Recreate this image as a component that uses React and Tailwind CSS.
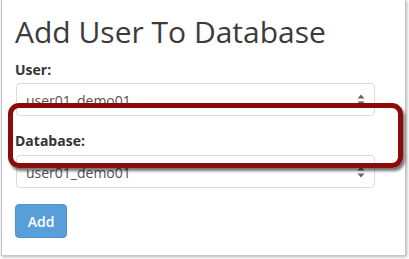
import React from "react";

function Arrows() {
  return (
    <svg width="8" height="12" viewBox="0 0 8 12" className="shrink-0">
      <path d="M4 0.5 L7.5 4.5 L0.5 4.5 Z" fill="#666" />
      <path d="M0.5 7.5 L7.5 7.5 L4 11.5 Z" fill="#666" />
    </svg>
  );
}

function FakeSelect({ value }) {
  return (
    <div className="h-[33px] w-[359px] ml-[1px] rounded-[4px] border border-[#dcdcdc] bg-white flex items-center justify-between pl-[9px] pr-[9px] pt-[1px] text-[14px] text-[#555]">
      <span>{value}</span>
      <Arrows />
    </div>
  );
}

export default function App() {
  return (
    <div className="w-[409px] h-[259px] bg-white" style={{ fontFamily: '"Open Sans", sans-serif' }}>
      <div className="relative ml-[1px] w-[405px] h-[256px] border-l border-r border-b border-[#c4c4c4] bg-white shadow-[1px_1px_3px_rgba(0,0,0,0.3)] pl-[13px] pt-[15px]">
        <h1 className="text-[30px] leading-[33px] font-normal text-[#3b3b3b]">Add User To Database</h1>
        <div className="mt-[12px] text-[14px] leading-[20px] font-bold text-[#333]">User:</div>
        <div className="mt-[3px]">
          <FakeSelect value="user01_demo01" />
        </div>
        <div className="mt-[15px] text-[14px] leading-[20px] font-bold text-[#333]">Database:</div>
        <div className="mt-[4px]">
          <FakeSelect value="user01_demo01" />
        </div>
        <button className="mt-[16px] w-[52px] h-[34px] rounded-[4px] bg-[#589fd9] border border-[#4d93cf] text-white text-[14px] font-semibold">
          Add
        </button>
        <div className="absolute left-[6px] top-[103px] w-[395px] h-[65px] rounded-[11px] border-[5px] border-[#8b0a0a] shadow-[2px_3px_3px_rgba(0,0,0,0.55)] pointer-events-none" />
      </div>
    </div>
  );
}
